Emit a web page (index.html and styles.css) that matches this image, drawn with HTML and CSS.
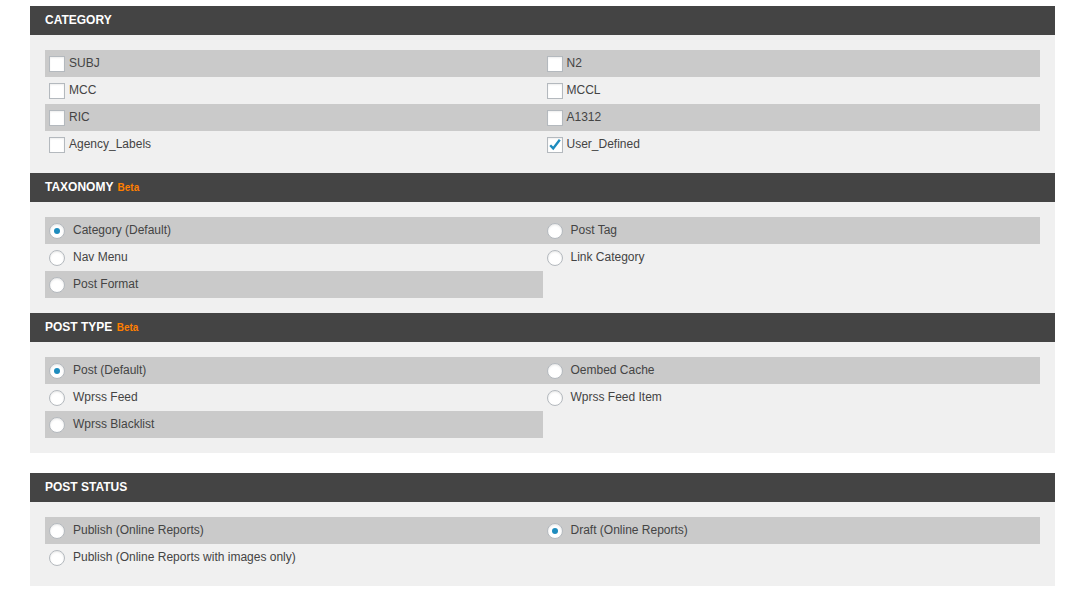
FILE: index.html
```html
<!DOCTYPE html>
<html>
<head>
<meta charset="utf-8">
<link rel="stylesheet" href="styles.css">
</head>
<body>
<div class="page">
  <section class="panel">
    <h3 class="panel-head">CATEGORY</h3>
    <div class="panel-body">
      <div class="grid">
        <label class="item"><span class="cb"></span><span class="lbl cbl">SUBJ</span></label>
        <label class="item"><span class="cb"></span><span class="lbl cbl">N2</span></label>
        <label class="item"><span class="cb"></span><span class="lbl cbl">MCC</span></label>
        <label class="item"><span class="cb"></span><span class="lbl cbl">MCCL</span></label>
        <label class="item"><span class="cb"></span><span class="lbl cbl">RIC</span></label>
        <label class="item"><span class="cb"></span><span class="lbl cbl">A1312</span></label>
        <label class="item"><span class="cb"></span><span class="lbl cbl">Agency_Labels</span></label>
        <label class="item"><span class="cb"><svg class="tick" viewBox="0 0 16 16" width="16" height="16"><path d="M3.2 8.2l3 3.2 6.6-8.6" fill="none" stroke="#1e8cbe" stroke-width="2.4" stroke-linejoin="miter"/></svg></span><span class="lbl cbl">User_Defined</span></label>
      </div>
    </div>
  </section>

  <section class="panel">
    <h3 class="panel-head">TAXONOMY <span class="beta">Beta</span></h3>
    <div class="panel-body">
      <div class="grid">
        <label class="item"><span class="rb on"></span><span class="lbl">Category (Default)</span></label>
        <label class="item"><span class="rb"></span><span class="lbl">Post Tag</span></label>
        <label class="item"><span class="rb"></span><span class="lbl">Nav Menu</span></label>
        <label class="item"><span class="rb"></span><span class="lbl">Link Category</span></label>
        <label class="item"><span class="rb"></span><span class="lbl">Post Format</span></label>
      </div>
    </div>
  </section>

  <section class="panel">
    <h3 class="panel-head">POST TYPE <span class="beta">Beta</span></h3>
    <div class="panel-body">
      <div class="grid">
        <label class="item"><span class="rb on"></span><span class="lbl">Post (Default)</span></label>
        <label class="item"><span class="rb"></span><span class="lbl">Oembed Cache</span></label>
        <label class="item"><span class="rb"></span><span class="lbl">Wprss Feed</span></label>
        <label class="item"><span class="rb"></span><span class="lbl">Wprss Feed Item</span></label>
        <label class="item"><span class="rb"></span><span class="lbl">Wprss Blacklist</span></label>
      </div>
    </div>
  </section>

  <section class="panel spaced">
    <h3 class="panel-head">POST STATUS</h3>
    <div class="panel-body">
      <div class="grid">
        <label class="item"><span class="rb"></span><span class="lbl">Publish (Online Reports)</span></label>
        <label class="item"><span class="rb on"></span><span class="lbl">Draft (Online Reports)</span></label>
        <label class="item"><span class="rb"></span><span class="lbl">Publish (Online Reports with images only)</span></label>
      </div>
    </div>
  </section>
</div>
</body>
</html>
```

FILE: styles.css
```css
html, body {
  margin: 0;
  padding: 0;
  background: #ffffff;
}

.page {
  width: 1025px;
  margin-left: 30px;
  padding-top: 6px;
  font-family: "Liberation Sans", Arial, sans-serif;
}

.panel.spaced {
  margin-top: 20px;
}

.panel-head {
  margin: 0;
  height: 29px;
  line-height: 29px;
  padding-left: 15px;
  background: #444444;
  color: #ffffff;
  font-size: 12px;
  font-weight: bold;
}

.beta {
  color: #ff7f00;
  font-size: 10px;
  font-weight: bold;
  margin-left: 1px;
}

.panel-body {
  background: #f0f0f0;
  padding: 15px 15px;
}

.grid {
  display: grid;
  grid-template-columns: 1fr 1fr;
}

.item {
  display: flex;
  align-items: center;
  height: 27px;
  padding-left: 4px;
  color: #444444;
  font-size: 12px;
}

.item:nth-child(4n+1),
.item:nth-child(4n+2) {
  background: #cacaca;
}

.cb {
  box-sizing: border-box;
  width: 16px;
  height: 16px;
  border: 1px solid #b4b9be;
  background: #ffffff;
  box-shadow: inset 0 1px 2px rgba(0, 0, 0, 0.07);
  position: relative;
  flex: none;
}

.tick {
  position: absolute;
  left: -1px;
  top: -1px;
}

.rb {
  box-sizing: border-box;
  width: 16px;
  height: 16px;
  border-radius: 50%;
  border: 1px solid #b4b9be;
  background: #ffffff;
  box-shadow: inset 0 1px 2px rgba(0, 0, 0, 0.1);
  flex: none;
  display: flex;
  align-items: center;
  justify-content: center;
}

.rb.on::before {
  content: "";
  width: 6px;
  height: 6px;
  border-radius: 50%;
  background: #1e8cbe;
}

.lbl {
  margin-left: 8px;
  position: relative;
  top: -1px;
}

.lbl.cbl {
  margin-left: 4px;
}
```
